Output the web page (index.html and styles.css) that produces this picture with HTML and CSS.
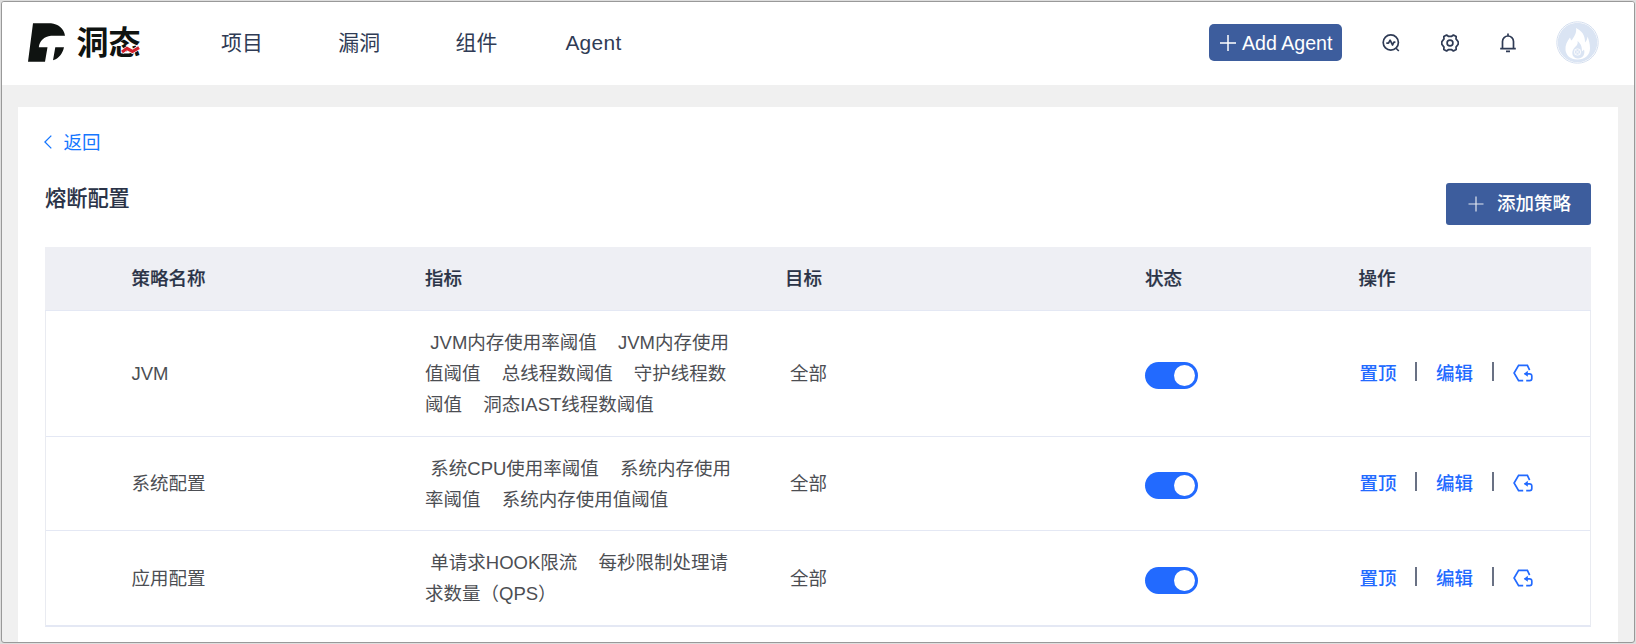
FILE: index.html
```html
<!DOCTYPE html>
<html lang="zh-CN">
<head>
<meta charset="utf-8">
<title>熔断配置</title>
<link rel="stylesheet" href="styles.css">
</head>
<body>
<svg width="0" height="0" class="defs">
  <symbol id="reset" viewBox="0 0 20 18">
    <path d="M16.600 6.200 14.400 1.300H5.600L1.100 9l4.500 7.700h4.600M11.600 9.800h5a2.200 2.200 0 0 1 2.200 2.200v2.500a2.200 2.200 0 0 1-2.200 2.200h-3.400" fill="none" stroke="currentColor" stroke-width="1.700"/>
    <path d="M14.800 6.800v6L10.800 9.800z" fill="currentColor"/>
  </symbol>
</svg>
<div class="window">
  <header class="topbar">
    <div class="logo">
      <svg class="mark" width="38" height="39" viewBox="0 0 38 39"><path d="M5 .3h18C30 .8 36 5.500 37 12.700H23C16 13.500 11.500 18 10.800 24.300h8.700L17 38.700H0zM27.300 24.300H36C34.500 31 31 35.500 25 37.300z" fill="#0f1311"/></svg>
      <span class="wordmark">洞态</span>
      <svg class="wave" width="19" height="8" viewBox="0 0 19 8"><path d="M1 6l5-3.500 5.500 3L18 1.600" fill="none" stroke="#fff" stroke-width="4.500"/><path d="M1 6l5-3.500 5.500 3L18 1.600" fill="none" stroke="#d3202b" stroke-width="3.200"/></svg>
    </div>
    <nav class="nav"><a>项目</a><a>漏洞</a><a>组件</a><a>Agent</a></nav>
    <div class="tools">
      <button class="add-agent"><svg width="16" height="16" viewBox="0 0 16 16"><path d="M8 0v16M0 8h16" stroke="#fff" stroke-width="1.500"/></svg><span>Add Agent</span></button>
      <svg class="icon" width="18" height="18" viewBox="0 0 18 18"><circle cx="8.800" cy="8.500" r="7.600"/><path d="M13.800 14l3 3M4.300 9.200h2.200l1.600-3 2.500 4.800 1.300-2.800h1.500"/></svg>
      <svg class="icon" width="18" height="18" viewBox="0 0 18 18"><circle cx="9" cy="9" r="2.900"/><path d="M5.600 1 7.300 2.300h3.400L12.400 1l2.800 1.600-.2 2.300 2.200 2.800v2.600L15 13.100l.2 2.300-2.800 1.600-1.700-1.300H7.300L5.600 17l-2.800-1.600.2-2.300L.8 10.300V7.700L3 4.900l-.2-2.300z"/></svg>
      <svg class="icon" width="18" height="20" viewBox="0 0 18 20"><path d="M3.500 15.600V8.500a5.500 5.500 0 0 1 11 0v7.100M1.200 15.700h15.600M9 3V.5M7 18.300h4"/></svg>
      <svg class="avatar" width="43" height="43" viewBox="0 0 43 43"><circle cx="21.500" cy="21.500" r="20.700" fill="#fff" stroke="#d5dfef" stroke-width="1"/><circle cx="21.500" cy="21.500" r="19.800" fill="#dae4f3"/><path d="M20 7c1 5-2 9-4.500 12.500-1-1-1-2-1.500-3-3 4-5 8-4.500 12.500C10 34 14 38.500 21.500 38.500S34 34 34 27.500c0-5-1-8-2.500-12 0 2-1 4.500-2.500 6C29 14 26 10 20 7z" fill="#fff"/><path d="M21.500 20c1 4-2 5-4 8-3 5 0 9.500 4.500 9.500s7.500-4 6-9c-1 1-1.500 1.500-2 2 0-5-1-7.500-4.500-10.500z" fill="#dae4f3"/><circle cx="21.500" cy="31" r="3.200" fill="none" stroke="#fff" stroke-width=".8"/><path d="m19 28.500 5 5m0-5-5 5" stroke="#fff" stroke-width=".7"/></svg>
    </div>
  </header>
  <main class="card">
    <a class="back"><svg width="8" height="14" viewBox="0 0 8 14"><path d="M7.300.6.900 7l6.400 6.400" fill="none" stroke="currentColor" stroke-width="1.300"/></svg><span>返回</span></a>
    <div class="title-row">
      <h1>熔断配置</h1>
      <button class="add-policy"><svg width="16" height="16" viewBox="0 0 16 16"><path d="M8 .5v15M.5 8h15" stroke="#fff" stroke-opacity=".85" stroke-width="1.200"/></svg><span>添加策略</span></button>
    </div>
    <section class="table">
      <div class="row head"><div>策略名称</div><div>指标</div><div>目标</div><div>状态</div><div>操作</div></div>
      <div class="row r1">
        <div>JVM</div>
        <div class="metrics"><p> JVM内存使用率阈值    JVM内存使用</p><p>值阈值    总线程数阈值    守护线程数</p><p>阈值    洞态IAST线程数阈值</p></div>
        <div class="target">全部</div>
        <div><i class="switch"></i></div>
        <div class="actions"><a>置顶</a><b></b><a>编辑</a><b></b><svg width="20" height="18"><use href="#reset"/></svg></div>
      </div>
      <div class="row r2">
        <div>系统配置</div>
        <div class="metrics"><p> 系统CPU使用率阈值    系统内存使用</p><p>率阈值    系统内存使用值阈值</p></div>
        <div class="target">全部</div>
        <div><i class="switch"></i></div>
        <div class="actions"><a>置顶</a><b></b><a>编辑</a><b></b><svg width="20" height="18"><use href="#reset"/></svg></div>
      </div>
      <div class="row r3">
        <div>应用配置</div>
        <div class="metrics"><p> 单请求HOOK限流    每秒限制处理请</p><p>求数量（QPS）</p></div>
        <div class="target">全部</div>
        <div><i class="switch"></i></div>
        <div class="actions"><a>置顶</a><b></b><a>编辑</a><b></b><svg width="20" height="18"><use href="#reset"/></svg></div>
      </div>
    </section>
  </main>
</div>
</body>
</html>
```
FILE: styles.css
```css
* { box-sizing: border-box; }
html, body { margin: 0; height: 100%; overflow: hidden; }
body {
  padding: 1px;
  background: #dedede;
  font: 18.5px/30.7px "Liberation Sans", "Noto Sans CJK SC", sans-serif;
  color: #4c4e53;
}
.defs { position: absolute; }
svg { display: block; flex: none; }
button { border: 0; padding: 0; font-family: inherit; color: #fff; background: #3d5d9d; display: flex; align-items: center; }
.window {
  height: 642px;
  border: 1px solid #999;
  border-radius: 3px;
  background: #f0f0f0;
  overflow: hidden;
}
.topbar { height: 83px; background: #fff; display: flex; color: #2f3b55; }
.logo { position: relative; width: 112px; margin: 21px 0 0 26px; display: flex; }
.wordmark {
  margin: -2px 0 0 10.5px;
  font: 700 32px/39px "Noto Sans CJK SC", sans-serif;
  color: #0f1311;
  white-space: nowrap;
}
.wave { position: absolute; left: 93px; top: 23px; }
.nav { display: flex; gap: 75.5px; margin-left: 81px; font-size: 20.9px; line-height: 82px; }
.nav a:last-child { margin-left: -7.5px; letter-spacing: .3px; }
.tools { display: flex; align-items: center; height: 81px; margin-left: auto; padding-right: 35px; }
.add-agent { width: 133px; height: 37px; border-radius: 5px; padding-left: 11px; gap: 6px; font-size: 19.6px; line-height: 37px; margin-right: 40px; white-space: nowrap; }
.add-agent span { padding-top: 2px; }
.icon { fill: none; stroke: #2f3b55; stroke-width: 1.7; stroke-linejoin: round; margin-right: 40.5px; }
.icon:nth-of-type(3) { margin-right: 39px; }
.card { height: 560px; margin: 22px 16px 0; padding: 20px 27px 0; background: #fff; }
.back { display: flex; align-items: center; gap: 12px; height: 31px; margin-left: -1.5px; color: #1677ff; }
.back span { padding-top: 2px; }
.back svg { margin-bottom: 1px; }
.title-row { display: flex; justify-content: space-between; height: 89px; }
h1 { margin: 25px 0 0; font-size: 21.2px; line-height: 32px; font-weight: 500; color: #2a3347; -webkit-text-stroke: .1px; }
.add-policy { width: 145px; height: 42px; margin-top: 25px; border-radius: 3px; padding-left: 22px; gap: 13px; font-size: 18.5px; font-weight: 500; line-height: 40px; }
.table { border: solid #e9ebf1; border-width: 0 1px; border-bottom: 2px solid #e4e8f4; }
.row {
  display: grid;
  grid-template-columns: 293.5px 360px 360px 213.5px 1fr;
  align-items: center;
  padding: 2px 0 0 85.5px;
  border-bottom: 1px solid #e4e8f4;
}
.head { height: 64px; margin: 0 -1px; padding-left: 86.5px; background: #eeeff4; font-weight: 500; color: #2a3347; -webkit-text-stroke: .2px; }
.r1 { height: 126px; }
.r2 { height: 94px; }
.r3 { height: 94px; border-bottom: 0; }
p { margin: 0; white-space: pre; word-spacing: .15px; }
.target { padding-left: 5px; }
.switch { display: block; width: 53px; height: 27px; margin: 2px 0 0; padding: 3px; border-radius: 14px; background: #226aff; }
.switch::after { content: ""; display: block; width: 21px; height: 21px; margin-left: auto; border-radius: 50%; background: #fff; }
.actions { display: flex; align-items: center; margin-left: 1px; color: #226aff; font-weight: 500; }
.actions b { width: 2px; height: 19px; margin: 0 19px 5px; background: #697184; }
.actions a { width: 36.5px; white-space: nowrap; }
.actions svg { margin: 0 0 2px; }
```
